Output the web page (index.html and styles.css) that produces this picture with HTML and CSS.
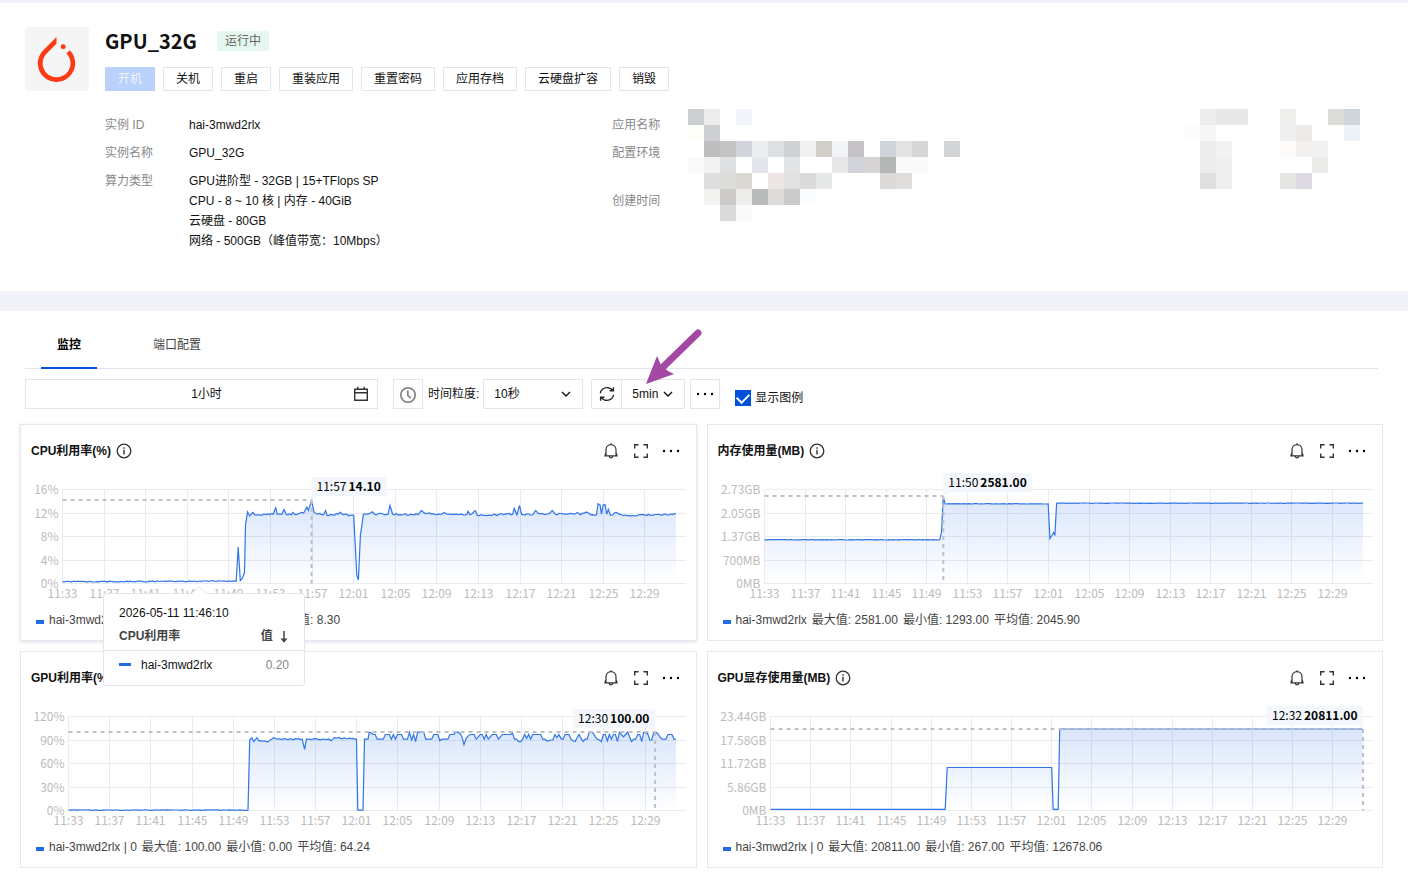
FILE: index.html
```html
<!DOCTYPE html>
<html lang="zh-CN">
<head>
    <meta charset="UTF-8">
    <meta name="viewport" content="width=device-width, initial-scale=1">
    <title>GPU_32G</title>
    <link rel="stylesheet" href="styles.css">
    <script src="charts.js" defer></script>
</head>
<body>
    <!-- 公用图标 -->
    <svg class="sprite" aria-hidden="true">
        <symbol id="i-info" viewBox="0 0 16 16">
            <circle cx="8" cy="8" r="6.8" fill="none" stroke="currentColor" stroke-width="1.3"/>
            <path d="M8 6.8v4.7M8 4.3v1.5" stroke="currentColor" stroke-width="1.4"/>
        </symbol>
        <symbol id="i-bell" viewBox="0 0 16 16">
            <path d="M1.3 12.9h13.4M3 12.6V6.8C3 3.9 5.1 1.7 8 1.7s5 2.2 5 5.1v5.8M8 1.7V.2M6.2 13.3c.3 1 .9 1.5 1.8 1.5s1.5-.5 1.8-1.5M3 9.6l-1.2 3M13 9.6l1.2 3" fill="none" stroke="currentColor" stroke-width="1.2"/>
        </symbol>
        <symbol id="i-full" viewBox="0 0 16 16">
            <path d="M1.7 5.6V1.7h3.9M10.4 1.7h3.9v3.9M14.3 10.4v3.9h-3.9M5.6 14.3H1.7v-3.9" fill="none" stroke="currentColor" stroke-width="1.4"/>
        </symbol>
        <symbol id="i-more" viewBox="0 0 18 16">
            <circle cx="2" cy="8" r="1.2"/><circle cx="9" cy="8" r="1.2"/><circle cx="16" cy="8" r="1.2"/>
        </symbol>
        <symbol id="i-down" viewBox="0 0 10 10">
            <path d="M1 3l4 4 4-4" fill="none" stroke="currentColor" stroke-width="1.4"/>
        </symbol>
    </svg>

    <header class="instance">
        <div class="logo">
            <svg width="45" height="45" viewBox="0 0 24 24" fill="#fc3b14" aria-hidden="true">
                <path d="M12.005 0L4.952 7.053a9.865 9.865 0 000 14.022 9.866 9.866 0 0014.022 0c3.984-3.9 3.986-10.205.085-14.023l-1.744 1.743c2.904 2.905 2.904 7.634 0 10.538s-7.634 2.904-10.538 0-2.904-7.634 0-10.538l4.647-4.646.582-.665zm3.568 3.899a1.327 1.327 0 00-1.327 1.327 1.327 1.327 0 001.327 1.328A1.327 1.327 0 0016.9 5.226 1.327 1.327 0 0015.573 3.9z"/>
            </svg>
        </div>
        <div class="instance-body">
            <div class="title-row">
                <h1>GPU_32G</h1>
                <span class="badge">运行中</span>
            </div>
            <div class="actions">
                <button class="btn btn-primary" disabled>开机</button>
                <button class="btn">关机</button>
                <button class="btn">重启</button>
                <button class="btn">重装应用</button>
                <button class="btn">重置密码</button>
                <button class="btn">应用存档</button>
                <button class="btn">云硬盘扩容</button>
                <button class="btn">销毁</button>
            </div>
            <div class="details">
                <dl class="info">
                    <dt>实例 ID</dt>
                    <dd>hai-3mwd2rlx</dd>
                    <dt>实例名称</dt>
                    <dd>GPU_32G</dd>
                    <dt>算力类型</dt>
                    <dd>GPU进阶型 - 32GB | 15+TFlops SP<br>CPU - 8 ~ 10 核 | 内存 - 40GiB<br>云硬盘 - 80GB<br>网络 - 500GB（峰值带宽：10Mbps）</dd>
                </dl>
                <div class="details-right">
                    <ul class="labels">
                        <li>应用名称</li>
                        <li class="two-line">配置环境</li>
                        <li>创建时间</li>
                    </ul>
                    <svg class="mosaic" width="672" height="112" aria-hidden="true"></svg>
                </div>
            </div>
        </div>
    </header>

    <main class="monitor">
        <nav class="tabs">
            <a href="#monitor" class="on">监控</a>
            <a href="#ports">端口配置</a>
        </nav>

        <div class="toolbar">
            <div class="range">
                <input type="text" value="1小时" aria-label="时间范围" readonly>
                <svg width="16" height="16" viewBox="0 0 16 16" fill="none" stroke="#333" stroke-width="1.4" aria-hidden="true">
                    <path d="M1.7 3.2h12.6v11H1.7zM1.7 6.8h12.6M4.8.8v3M11.2.8v3"/>
                </svg>
            </div>
            <button class="icon-btn clock" aria-label="时间对比">
                <svg width="18" height="18" viewBox="0 0 18 18" fill="none" stroke="#888" stroke-width="1.8" aria-hidden="true">
                    <circle cx="9" cy="9" r="7.2"/><path d="M8.8 4.5v4.8l3 2.8"/>
                </svg>
            </button>
            <label for="step">时间粒度:</label>
            <div class="select step">
                <select id="step"><option>10秒</option><option>1分钟</option></select>
                <svg width="10" height="10"><use href="#i-down"/></svg>
            </div>
            <div class="refresh">
                <button class="icon-btn" aria-label="刷新">
                    <svg width="16" height="16" viewBox="0 0 16 16" fill="none" stroke="#222" stroke-width="1.4" aria-hidden="true">
                        <path d="M1.4 7.2C1.7 4 4.6 1.6 8 1.6c2.3 0 4.3 1 5.6 2.8M14.6 8.8C14.3 12 11.4 14.4 8 14.4c-2.3 0-4.3-1-5.6-2.8M14.4 1.2v3.6h-3.8M1.6 14.8v-3.6h3.8"/>
                    </svg>
                </button>
                <div class="select">
                    <select aria-label="自动刷新间隔"><option>5min</option><option>1min</option></select>
                    <svg width="10" height="10"><use href="#i-down"/></svg>
                </div>
                <svg class="pointer" width="60" height="58" viewBox="0 0 60 58" aria-hidden="true">
                    <path d="M54 5L19 39" stroke="#a349a4" stroke-width="7" stroke-linecap="round"/>
                    <path d="M2 56L13 28l4 9 7 6 6 3z" fill="#a349a4"/>
                </svg>
            </div>
            <button class="icon-btn more" aria-label="更多">
                <svg width="18" height="16"><use href="#i-more"/></svg>
            </button>
            <label class="check"><input type="checkbox" checked><span>显示图例</span></label>
        </div>

        <div class="cards">
            <section class="card active">
                <div class="card-head">
                    <h2>CPU利用率(%)</h2>
                    <svg class="info-icon" width="16" height="16"><use href="#i-info"/></svg>
                    <div class="card-tools">
                        <button aria-label="告警"><svg width="16" height="16"><use href="#i-bell"/></svg></button>
                        <button aria-label="全屏"><svg width="16" height="16"><use href="#i-full"/></svg></button>
                        <button aria-label="更多"><svg width="18" height="16"><use href="#i-more"/></svg></button>
                    </div>
                </div>
                <svg class="chart" data-chart="cpu"></svg>
                <p class="legend"><i></i><span>hai-3mwd2rlx</span><span>最大值: 14.10</span><span>最小值: 0.10</span><span>平均值: 8.30</span></p>

                <div class="tip">
                    <svg class="tip-caret" width="16" height="8" viewBox="0 0 16 8"><path d="M0 8l8-7 8 7" fill="#fff" stroke="#e3e5ec"/></svg>
                    <p>2026-05-11 11:46:10</p>
                    <table>
                        <thead>
                            <tr>
                                <th>CPU利用率</th>
                                <th class="num">值 <svg width="10" height="12" viewBox="0 0 10 12"><path d="M5 0v10" stroke="#444" stroke-width="1.5"/><path d="M1.5 7.5h7L5 11.8z" fill="#444"/></svg></th>
                            </tr>
                        </thead>
                        <tbody>
                            <tr><td><i></i>hai-3mwd2rlx</td><td class="num">0.20</td></tr>
                        </tbody>
                    </table>
                </div>
            </section>

            <section class="card">
                <div class="card-head">
                    <h2>内存使用量(MB)</h2>
                    <svg class="info-icon" width="16" height="16"><use href="#i-info"/></svg>
                    <div class="card-tools">
                        <button aria-label="告警"><svg width="16" height="16"><use href="#i-bell"/></svg></button>
                        <button aria-label="全屏"><svg width="16" height="16"><use href="#i-full"/></svg></button>
                        <button aria-label="更多"><svg width="18" height="16"><use href="#i-more"/></svg></button>
                    </div>
                </div>
                <svg class="chart" data-chart="mem"></svg>
                <p class="legend"><i></i><span>hai-3mwd2rlx</span><span>最大值: 2581.00</span><span>最小值: 1293.00</span><span>平均值: 2045.90</span></p>
            </section>

            <section class="card">
                <div class="card-head">
                    <h2>GPU利用率(%)</h2>
                    <svg class="info-icon" width="16" height="16"><use href="#i-info"/></svg>
                    <div class="card-tools">
                        <button aria-label="告警"><svg width="16" height="16"><use href="#i-bell"/></svg></button>
                        <button aria-label="全屏"><svg width="16" height="16"><use href="#i-full"/></svg></button>
                        <button aria-label="更多"><svg width="18" height="16"><use href="#i-more"/></svg></button>
                    </div>
                </div>
                <svg class="chart" data-chart="gpu"></svg>
                <p class="legend"><i></i><span>hai-3mwd2rlx | 0</span><span>最大值: 100.00</span><span>最小值: 0.00</span><span>平均值: 64.24</span></p>
            </section>

            <section class="card">
                <div class="card-head">
                    <h2>GPU显存使用量(MB)</h2>
                    <svg class="info-icon" width="16" height="16"><use href="#i-info"/></svg>
                    <div class="card-tools">
                        <button aria-label="告警"><svg width="16" height="16"><use href="#i-bell"/></svg></button>
                        <button aria-label="全屏"><svg width="16" height="16"><use href="#i-full"/></svg></button>
                        <button aria-label="更多"><svg width="18" height="16"><use href="#i-more"/></svg></button>
                    </div>
                </div>
                <svg class="chart" data-chart="vram"></svg>
                <p class="legend"><i></i><span>hai-3mwd2rlx | 0</span><span>最大值: 20811.00</span><span>最小值: 267.00</span><span>平均值: 12678.06</span></p>
            </section>
        </div>
    </main>
</body>
</html>
```
FILE: styles.css
```css
* {
    margin: 0;
    padding: 0;
    box-sizing: border-box;
}
body {
    font: 12px/20px "Liberation Sans", "Noto Sans CJK SC", sans-serif;
    color: #111;
    background-color: #fff;
}
button, input, select {
    font: inherit;
    color: inherit;
}
button {
    border: 0;
    background: none;
    cursor: pointer;
}
a {
    text-decoration: none;
}
svg {
    flex: none;
}
.sprite {
    position: absolute;
    width: 0;
    height: 0;
}

/* 实例信息 */
.instance {
    display: flex;
    gap: 16px;
    padding: 24px 35px 40px 25px;
    border-top: 3px solid #f2f3f8;
    border-bottom: 20px solid #f2f3f8;
}
.logo {
    display: flex;
    flex: none;
    align-items: center;
    justify-content: center;
    width: 64px;
    height: 64px;
    padding-right: 2px;
    border-radius: 4px;
    background-color: #f5f5f5;
}
.instance-body {
    flex: 1;
    min-width: 0;
}
.title-row {
    display: flex;
    align-items: center;
    gap: 20px;
    height: 28px;
}
.title-row h1 {
    font: bold 20px/28px "Noto Sans CJK SC", sans-serif;
}
.badge {
    padding: 0 8px;
    border-radius: 2px;
    background-color: #e5f7ef;
    color: #666;
}
.actions {
    display: flex;
    flex-wrap: wrap;
    gap: 8px;
    margin-top: 12px;
}
.btn {
    height: 24px;
    padding: 0 12px;
    border: 1px solid #e3e5ec;
    line-height: 20px;
    background-color: #fff;
}
.btn-primary {
    border-color: #bad1fc;
    background-color: #bad1fc;
    color: #f0f5ff;
}
.details {
    display: grid;
    grid-template-columns: 2fr 3fr;
    margin-top: 18px;
}
.info {
    display: grid;
    grid-template-columns: 84px 1fr;
    row-gap: 8px;
    align-content: start;
    padding-top: 6px;
}
.info dt,
.labels {
    color: #888;
}
.details-right {
    display: flex;
    min-width: 0;
}
.labels {
    flex: none;
    width: 76px;
    padding-top: 6px;
    list-style: none;
}
.labels li {
    margin-bottom: 8px;
}
.labels .two-line {
    height: 40px;
}

/* 标签页 */
.monitor {
    padding-bottom: 15px;
}
.tabs {
    display: flex;
    gap: 40px;
    margin: 0 30px 0 25px;
    padding: 0 16px;
    border-bottom: 1px solid #e3e5ee;
}
.tabs a {
    height: 58px;
    margin-bottom: -1px;
    padding: 24px 16px 0;
    color: #444;
}
.tabs .on {
    border-bottom: 2px solid #0052d9;
    font-weight: bold;
    color: #000;
}

/* 工具栏 */
.toolbar {
    display: flex;
    align-items: center;
    height: 30px;
    margin: 10px 25px 15px;
}
.range {
    position: relative;
    flex: 0 1 353px;
    margin-right: 15px;
}
.range input {
    display: block;
    width: 100%;
    height: 30px;
    padding: 0 0 3px 10px;
    border: 1px solid #e3e5ee;
    text-align: center;
}
.range svg {
    position: absolute;
    top: 7px;
    right: 9px;
}
.icon-btn {
    display: flex;
    align-items: center;
    justify-content: center;
    width: 30px;
    height: 30px;
    border: 1px solid #e3e5ee;
}
.clock {
    margin-right: 5px;
}
.clock svg {
    margin-top: 2px;
}
.select {
    position: relative;
    width: 64px;
}
.select select {
    display: block;
    width: 100%;
    height: 30px;
    padding: 0 10px;
    border: 1px solid #e3e5ee;
    border-radius: 0;
    background-color: #fff;
    appearance: none;
}
.select svg {
    position: absolute;
    top: 10px;
    right: 12px;
    pointer-events: none;
}
.step {
    width: 100px;
    margin: 0 8px 0 4px;
}
.refresh {
    position: relative;
    display: flex;
    margin-right: 5px;
}
.refresh .icon-btn {
    width: 31px;
    margin-right: -1px;
}
.pointer {
    position: absolute;
    left: 53px;
    top: -51px;
    pointer-events: none;
}
.more {
    margin-right: 15px;
}
.check {
    display: flex;
    align-items: center;
    gap: 4px;
    padding-top: 8px;
}
.check input {
    display: grid;
    place-content: center;
    width: 16px;
    height: 16px;
    background-color: #0052d9;
    appearance: none;
}
.check input:not(:checked) {
    border: 1px solid #c4c8d4;
    background-color: #fff;
}
.check input:checked::before {
    content: "";
    width: 10px;
    height: 6px;
    margin-top: -3px;
    border-left: 2px solid #fff;
    border-bottom: 2px solid #fff;
    transform: rotate(-45deg);
}

/* 图表卡片 */
.cards {
    display: grid;
    grid-template-columns: 1fr 1fr;
    gap: 10px;
    margin: 0 25px 0 20px;
}
.card {
    position: relative;
    min-width: 0;
    height: 217px;
    border: 1px solid #e5e7ee;
    background-color: #fff;
}
.active {
    z-index: 1;
    box-shadow: 0 1px 4px rgba(0, 20, 80, .12);
}
.card-head {
    display: flex;
    align-items: center;
    height: 44px;
    padding: 8px 17px 0 10px;
}
.card-head h2 {
    font-size: 12px;
}
.info-icon {
    margin-left: 5px;
    color: #333;
}
.card-tools {
    display: flex;
    gap: 14px;
    margin-left: auto;
}
.card-tools button {
    display: flex;
    justify-content: center;
    width: 16px;
    color: #333;
}
.chart {
    display: block;
    width: 100%;
    height: 136px;
    overflow: visible;
    font: 12px "Noto Sans CJK SC", sans-serif;
}
.chart .grid {
    stroke: #e9ebf0;
}
.chart .axis {
    fill: #bbb;
}
.chart .line {
    fill: none;
    stroke: #3076e6;
    stroke-width: 1.2;
}
.chart .peak {
    fill: none;
    stroke: #bcc0c7;
    stroke-width: 2;
    stroke-dasharray: 4 4;
}
.chart .flag {
    fill: #f3f6fa;
}
.chart .value {
    font-weight: bold;
}
.legend {
    display: flex;
    align-items: center;
    gap: 5px;
    padding: 5px 15px 0;
    white-space: nowrap;
    color: #444;
}
.legend i {
    width: 8px;
    height: 4px;
    margin-top: 3px;
    background-color: #246be8;
}

/* 悬浮提示 */
.tip {
    position: absolute;
    left: 82px;
    top: 168px;
    z-index: 2;
    width: 202px;
    border: 1px solid #e3e5ec;
    border-radius: 3px;
    background-color: #fff;
}
.tip-caret {
    position: absolute;
    left: 87px;
    top: -8px;
}
.tip p {
    padding: 9px 15px 0;
}
.tip table {
    width: 100%;
    border-collapse: collapse;
}
.tip th {
    height: 27px;
    padding: 0 15px;
    border-bottom: 1px solid #e3e5ec;
    text-align: left;
    color: #444;
}
.tip th svg {
    margin-left: 3px;
    vertical-align: -3px;
}
.tip td {
    height: 35px;
    padding: 0 15px 5px;
}
.tip td i {
    display: inline-block;
    width: 12px;
    height: 3px;
    margin-right: 10px;
    vertical-align: 3px;
    background-color: #246be8;
}
.tip th.num,
.tip td.num {
    text-align: right;
}
.tip td.num {
    color: #888;
}
```
FILE: charts.js
```js
// 时间轴: 从 11:33 开始, 共 59 分钟, 坐标为 [分钟, 数值]
var TOTAL = 59;
var times = ['11:33', '11:37', '11:41', '11:45', '11:49', '11:53', '11:57', '12:01',
    '12:05', '12:09', '12:13', '12:17', '12:21', '12:25', '12:29'];

// 12:02 之后的 GPU 利用率, 每 10 秒一个点
var gpuTail = [100, 99, 97, 97, 91, 91, 91, 91, 97, 97, 97, 91, 97, 91, 97, 97, 97, 91, 91, 91,
    100, 90, 97, 88, 100, 100, 100, 100, 91, 91, 91, 91, 97, 97, 97, 89, 91, 91, 91, 91,
    97, 97, 97, 100, 100, 98, 94, 84, 92, 95, 97, 97, 97, 91, 94, 97, 97, 91, 97, 91,
    94, 97, 97, 97, 91, 94, 97, 97, 97, 97, 97, 99, 91, 91, 88, 88, 91, 97, 92, 97,
    91, 97, 97, 97, 97, 97, 91, 91, 89, 89, 90, 90, 97, 93, 97, 92, 91, 97, 97, 97,
    91, 89, 88, 93, 97, 92, 88, 91, 91, 100, 100, 99, 94, 91, 90, 88, 97, 97, 89, 97,
    91, 97, 97, 88, 100, 97, 94, 97, 100, 94, 88, 91, 91, 97, 97, 88, 100, 99, 98, 90,
    90, 100, 100, 98, 94, 91, 91, 91, 97, 97, 97, 91, 91];

var charts = {
    cpu: {
        left: 41, max: 16, noise: 0.16,
        labels: ['16%', '12%', '8%', '4%', '0%'],
        peak: [23.95, 14.1, '11:57', '14.10'],
        data: [[0, 0.3], [16.7, 0.4], [16.9, 6.2], [17.1, 0.5], [17.3, 0.9], [17.5, 1.9], [17.6, 10],
            [17.8, 12.2], [18, 11.5], [18.3, 12.1], [18.5, 11.7], [20.25, 11.8], [20.5, 12.9], [20.65, 11.8],
            [21.1, 11.8], [21.3, 12.6], [21.5, 11.8], [22, 11.7], [22.15, 12.1], [22.4, 11.7], [23, 12.1],
            [23.2, 12], [23.5, 13], [23.65, 12.4], [23.95, 14.1], [24.2, 12.1], [24.5, 11.8], [25.1, 11.7],
            [25.3, 12.4], [25.45, 11.6], [26.5, 11.8], [26.7, 12.1], [27, 11.7], [28, 11.6], [28.3, 1.4],
            [28.46, 0.6], [28.65, 8.2], [28.95, 11.8], [29.4, 11.8], [29.8, 12.2], [30, 11.8], [31.3, 11.8],
            [31.5, 13.3], [31.75, 11.8], [34.2, 11.7], [34.5, 12.4], [34.9, 11.9], [36.2, 11.8], [36.7, 12.1],
            [37, 11.8], [38.9, 11.8], [39, 12.3], [39.2, 11.7], [39.7, 12.4], [39.9, 11.6], [43.3, 11.8],
            [43.45, 12.8], [43.7, 11.7], [43.95, 13.3], [44.15, 11.8], [45.2, 11.7], [45.5, 12.4], [45.8, 11.9],
            [46.8, 11.9], [47.1, 12.4], [47.4, 11.8], [49.3, 11.8], [49.5, 12.1], [49.8, 11.7], [50.5, 12.1],
            [50.8, 11.7], [51.35, 11.7], [51.5, 13.6], [51.7, 13.4], [51.83, 11.8], [52, 13.4], [52.2, 13.4],
            [52.33, 11.8], [52.5, 12.6], [52.7, 11.6], [53.3, 12.1], [54, 11.6], [59, 11.8]]
    },
    mem: {
        left: 56, max: 2795, noise: 6,
        labels: ['2.73GB', '2.05GB', '1.37GB', '700MB', '0MB'],
        peak: [17.63, 2581, '11:50', '2581.00'],
        data: [[0, 1300], [17.27, 1300], [17.45, 1516], [17.63, 2581], [17.8, 2369], [27.97, 2369],
            [28.13, 1328], [28.5, 1516], [28.63, 1427], [28.8, 2389], [59, 2389]]
    },
    gpu: {
        left: 47, max: 120, noise: 0.8,
        labels: ['120%', '90%', '60%', '30%', '0%'],
        peak: [56.97, 100, '12:30', '100.00'],
        data: [[0, 0.5], [17.43, 0.5], [17.6, 90], [17.8, 93], [18, 88], [18.3, 93], [18.5, 89], [19.4, 88],
            [19.9, 93], [20.3, 91], [22.7, 91], [22.93, 78], [23.1, 91], [25.3, 91], [25.5, 89], [25.8, 93],
            [27.97, 91], [28.1, 0.5], [28.6, 0.5], [28.75, 91], [29.1, 91]].concat(gpuTail.map(function(v, i) {
            return [29.2 + i * (TOTAL - 29.2) / (gpuTail.length - 1), v];
        }))
    },
    vram: {
        left: 62, max: 24003, noise: 0,
        labels: ['23.44GB', '17.58GB', '11.72GB', '5.86GB', '0MB'],
        peak: [59, 20811, '12:32', '20811.00'],
        data: [[0, 300], [17.4, 300], [17.6, 10980], [28, 10980], [28.15, 300], [28.65, 300],
            [28.8, 20811], [59, 20811]]
    }
};

// 在较长的区间内按 10 秒补点并加入抖动
function expand(data, noise) {
    var out = [];
    var seed = 7;
    for (var i = 0; i < data.length - 1; i++) {
        var a = data[i], b = data[i + 1];
        out.push(a);
        var n = Math.floor((b[0] - a[0]) * 6);
        if (n < 3 || noise === 0) continue;
        // 低位平稳段抖动更小
        var amp = a[1] < 1 ? noise / 2 : noise;
        for (var k = 1; k < n; k++) {
            seed = (seed * 1103 + 12345) % 65536;
            var v = a[1] + (b[1] - a[1]) * k / n + (seed / 32768 - 1) * amp;
            out.push([a[0] + (b[0] - a[0]) * k / n, v]);
        }
    }
    out.push(data[data.length - 1]);
    return out;
}

function text(cls, x, y, anchor, str) {
    return '<text class="' + cls + '" x="' + x + '" y="' + y + '" text-anchor="' + anchor + '">' + str + '</text>';
}

function draw(svg) {
    var name = svg.getAttribute('data-chart');
    var c = charts[name];
    var width = svg.clientWidth;
    var top = 20.5, bottom = 114.5, left = c.left + 0.5, right = width - 10;
    var end = width - 20;

    function px(m) { return left + (end - left) * m / TOTAL; }
    function py(v) { return bottom - (bottom - top) * v / c.max; }

    var html = '<defs><linearGradient id="fill-' + name + '" x1="0" y1="0" x2="0" y2="1">' +
        '<stop offset="0" stop-color="#246be8" stop-opacity=".17"/>' +
        '<stop offset="1" stop-color="#246be8" stop-opacity="0"/></linearGradient></defs>';

    for (var i = 0; i < 5; i++) {
        var y = Math.floor(top + (bottom - top) * i / 4) + 0.5;
        html += '<path class="grid" d="M' + left + ' ' + y + 'H' + right + '"/>';
        html += text('axis', left - 4, y + 4.5, 'end', c.labels[i]);
    }
    for (var j = 0; j < times.length; j++) {
        var x = Math.floor(px(j * 4)) + 0.5;
        html += '<path class="grid" d="M' + x + ' ' + top + 'V' + bottom + '"/>';
        html += text('axis', x, 129, 'middle', times[j]);
    }

    var line = expand(c.data, c.noise).map(function(p) {
        return px(p[0]).toFixed(1) + ' ' + py(p[1]).toFixed(1);
    }).join('L');
    html += '<path fill="url(#fill-' + name + ')" d="M' + line + 'V' + bottom + 'H' + left + 'Z"/>';
    html += '<path class="line" d="M' + line + '"/>';

    // 最大值标记, 靠右时标签向左展开
    var mx = px(c.peak[0]), my = Math.floor(py(c.peak[1]));
    html += '<path class="peak" d="M' + left + ' ' + my + 'H' + mx + '"/>';
    html += '<path class="peak" d="M' + mx + ' ' + my + 'V' + bottom + '"/>';
    var w = 40 + c.peak[3].length * 7;
    var fx = mx + w > width ? mx - w : mx;
    var tipX = fx < mx ? -7 : 7;
    html += '<path class="flag" d="M' + fx + ' ' + (my - 23) + 'h' + w + 'v19H' + fx + 'z"/>';
    html += '<path class="flag" d="M' + mx + ' ' + my + 'v-5h' + tipX + 'z"/>';
    html += '<text x="' + (fx + 5) + '" y="' + (my - 9) + '">' + c.peak[2] + '</text>';
    html += '<text class="value" x="' + (fx + 37) + '" y="' + (my - 9) + '">' + c.peak[3] + '</text>';

    svg.innerHTML = html;
}

// 马赛克: 每行为 [列, 颜色]
var mosaic = [
    [[0, '#ccd0d3'], [1, '#ececec'], [3, '#f2f6fb'], [32, '#ededed'], [33, '#e8e8e8'], [34, '#e8e8e8'], [37, '#eeeeec'], [40, '#dcdcd9'], [41, '#d0d5d9']],
    [[0, '#fefef8'], [1, '#cecfd3'], [31, '#fcfcfc'], [32, '#f7f7f7'], [37, '#efefef'], [38, '#ebeae8'], [41, '#ecf3f8']],
    [[1, '#bdbdbd'], [2, '#c3c4c3'], [3, '#d2d6da'], [4, '#ecedef'], [5, '#dce0e3'], [6, '#d0d1d2'], [7, '#f1f1f1'], [8, '#d2cec8'], [9, '#f3f4f7'], [10, '#c5c3c6'], [12, '#cfd4d8'], [13, '#e3e3e3'], [14, '#d7d7d7'], [16, '#d3d4d6'], [32, '#ededed'], [33, '#f3f3f3'], [37, '#fcfbf9'], [38, '#f2f1ef'], [39, '#f1f1f1']],
    [[0, '#fafafa'], [1, '#f3f3f3'], [2, '#dee0e2'], [4, '#e4e5ea'], [6, '#e3e4e6'], [9, '#e8e8e8'], [10, '#d3d4da'], [11, '#d7d4d6'], [12, '#b5b7b7'], [13, '#fafafa'], [14, '#fafafa'], [32, '#ececec'], [33, '#efefef'], [39, '#ebebe9']],
    [[1, '#dededf'], [2, '#dcdddb'], [3, '#dcd8d3'], [5, '#ebe6e3'], [6, '#e1e1e2'], [7, '#dadada'], [8, '#e6e8e8'], [12, '#dbdad9'], [13, '#dfdedd'], [32, '#dfdfdf'], [33, '#eeeeee'], [37, '#e5e5e3'], [38, '#dcdae0']],
    [[1, '#f3f3f2'], [2, '#cccbc9'], [3, '#ededec'], [4, '#b9bcbb'], [5, '#dcdbda'], [6, '#cbcbcb'], [7, '#fafcfe']],
    [[2, '#dadada'], [3, '#f9f9f9']]
];
document.querySelector('.mosaic').innerHTML = mosaic.map(function(row, y) {
    return row.map(function(cell) {
        return '<rect x="' + cell[0] * 16 + '" y="' + y * 16 + '" width="16" height="16" fill="' + cell[1] + '"/>';
    }).join('');
}).join('');

function drawAll() {
    document.querySelectorAll('.chart').forEach(draw);
}
drawAll();
window.onresize = drawAll;
```
